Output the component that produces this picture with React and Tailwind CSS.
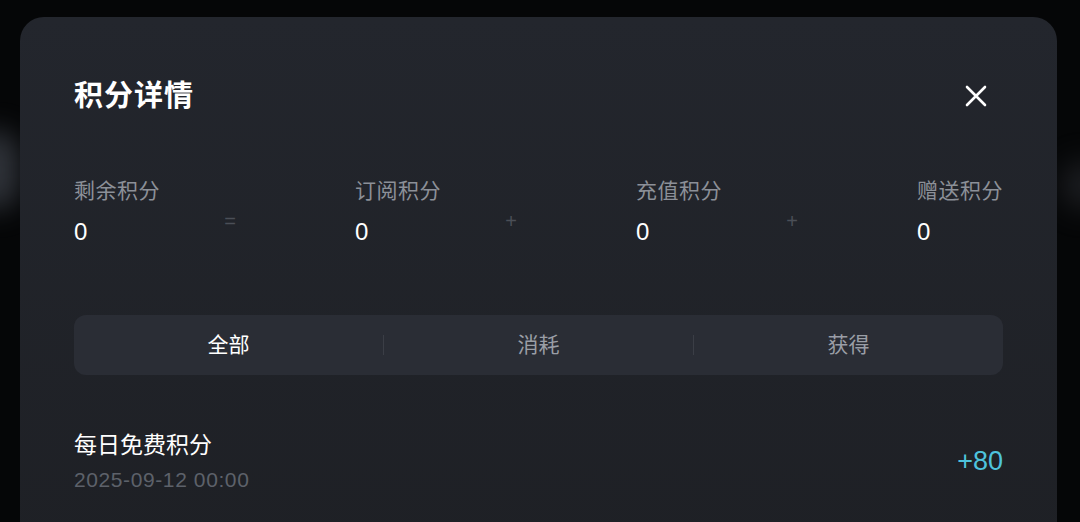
import React from "react";

const font = { fontFamily: '"Liberation Sans", "Noto Sans CJK SC", sans-serif' };

function Stat({ label, value }) {
  return (
    <div className="flex flex-col">
      <div className="h-[28px] leading-[28px] text-[21px] tracking-[0.5px] text-[#8c9098] whitespace-nowrap">{label}</div>
      <div className="mt-[12px] h-[30px] leading-[30px] text-[24px] text-white">{value}</div>
    </div>
  );
}

function Op({ children }) {
  return (
    <div className="w-[14px] flex justify-center text-[20px] text-[#4b4f57] mt-[30px] leading-[28px]">{children}</div>
  );
}

export default function App() {
  return (
    <div className="relative w-[1080px] h-[522px] overflow-hidden bg-[#050607]" style={font}>
      <div className="absolute left-[-30px] top-[130px] w-[50px] h-[80px] rounded-full bg-[#3a3e46] blur-[14px] opacity-80" />
      <div className="absolute right-[-30px] top-[160px] w-[50px] h-[50px] rounded-full bg-[#2a2c31] blur-[14px] opacity-60" />
      <div className="absolute left-[20px] top-[17px] w-[1037px] h-[540px] rounded-[24px] bg-gradient-to-b from-[#23262d] to-[#1e2025] px-[54px] pt-[59px]">
        <div className="flex items-center justify-between h-[40px]">
          <div className="text-[29px] font-bold text-white tracking-[1px] leading-[40px]">积分详情</div>
          <svg width="22" height="22" viewBox="0 0 22 22" className="mr-[16px]">
            <path d="M2 2 L20 20 M20 2 L2 20" stroke="white" strokeWidth="2.6" strokeLinecap="round" />
          </svg>
        </div>

        <div className="flex mt-[61px]">
          <div className="w-[281px] flex">
            <div className="w-[149px]"><Stat label="剩余积分" value="0" /></div>
            <Op>=</Op>
          </div>
          <div className="w-[281px] flex">
            <div className="w-[149px]"><Stat label="订阅积分" value="0" /></div>
            <Op>+</Op>
          </div>
          <div className="w-[281px] flex">
            <div className="w-[149px]"><Stat label="充值积分" value="0" /></div>
            <Op>+</Op>
          </div>
          <Stat label="赠送积分" value="0" />
        </div>

        <div className="mt-[68px] h-[60px] w-[929px] rounded-[12px] bg-[#2a2d35] flex items-center">
          <div className="flex-1 text-center text-[21px] text-white">全部</div>
          <div className="w-px h-[20px] bg-[#3b3e46]" />
          <div className="flex-1 text-center text-[21px] text-[#9a9ea6]">消耗</div>
          <div className="w-px h-[20px] bg-[#3b3e46]" />
          <div className="flex-1 text-center text-[21px] text-[#9a9ea6]">获得</div>
        </div>

        <div className="mt-[55px] w-[929px] flex items-center justify-between">
          <div className="flex flex-col">
            <div className="h-[30px] leading-[30px] text-[23px] text-white">每日免费积分</div>
            <div className="mt-[8px] h-[24px] leading-[24px] text-[21px] tracking-[0.6px] text-[#5d616a]">2025-09-12 00:00</div>
          </div>
          <div className="text-[27px] text-[#4ec3dd]">+80</div>
        </div>
      </div>
    </div>
  );
}
